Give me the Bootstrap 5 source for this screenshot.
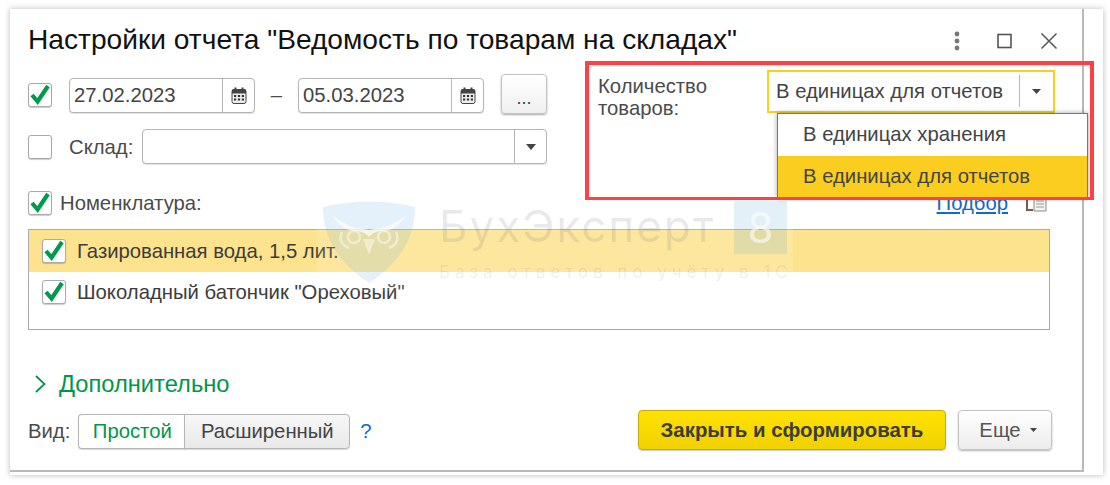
<!DOCTYPE html>
<html lang="ru">
<head>
<meta charset="utf-8">
<title>Настройки отчета</title>
<link rel="stylesheet" href="https://cdn.jsdelivr.net/npm/bootstrap@5.3.0/dist/css/bootstrap.min.css">
<style>
html,body{height:100%;background:#fff;overflow:hidden}
body{font-family:"Liberation Sans",Arial,sans-serif;font-size:20.3px;color:#4b4b4b;line-height:22px}
.sheet{width:1093px;height:466px;margin:9px 0 0 10px;background:#fff;box-shadow:0 0 6px rgba(0,0,0,.28)}
.win{position:relative;width:1074px;height:463px;border-right:2px solid #b9b9b9;border-bottom:2px solid #b9b9b9;padding:13px 32px 0 18px}
.ttl{height:36px;line-height:36px;font-size:28.15px;color:#111;margin:0 0 12px;font-weight:400}
.ctrls{position:absolute;top:14px;right:24px;height:36px;gap:27px}
.top{height:121px}
.lcol{width:519px;padding-top:5px;margin-right:51px}
.r1{height:40px}
.r2{height:35px;margin-top:14px}
.r3{height:23px}
.form-check-input.box{width:24px;height:24px;margin:0;flex:none;border:1px solid #aaa;border-radius:3px;box-shadow:0 1px 1px rgba(0,0,0,.2);background-color:#fff;background-size:26px 26px;background-position:center;opacity:1}
.form-check-input.box:checked{background-color:#fff;border-color:#aaa;--bs-form-check-bg-image:url("data:image/svg+xml,%3Csvg xmlns='http://www.w3.org/2000/svg' viewBox='0 0 26 26'%3E%3Cpath fill='none' stroke='%23009a4c' stroke-width='4.2' d='M5 13l5.6 6.5L21 4'/%3E%3C/svg%3E")}
.fld{height:35px;border:1px solid #b5b5b5;border-radius:4px;background:#fff;box-shadow:0 1px 1px rgba(0,0,0,.12);color:#444;flex-wrap:nowrap}
.fld .val{flex:1;padding:0 4px;line-height:33px;white-space:nowrap}
.fld .cap{width:32px;border-left:1px solid #b5b5b5;height:100%}
.dt{width:186px}
.gap1{margin-left:17px}
.dash{width:43px;text-align:center}
.more{width:46px;height:40px;margin:0 0 2px 17px;padding:8px 0 0;background:linear-gradient(#fff,#f0f0f0);border:1px solid #c4c4c4;border-radius:4px;box-shadow:0 1px 2px rgba(0,0,0,.35);color:#444;font-size:18px;line-height:22px}
.sk{width:73px;padding-left:17px;white-space:nowrap;flex:none}
.wide{width:405px}
.lblq{width:169px;padding-top:5px}
.combo{position:relative;width:288px;height:43px;border:2px solid #fccf1f;background:#fff;color:#444;padding:0 0 0 7px;line-height:39px}
.combo .sep{width:34px;height:32px;border-left:1px solid #b5b5b5;margin-top:3px}
.pop{display:block;position:absolute;left:8px;top:41px;width:311px;height:85px;min-width:0;padding:0;margin:0;border:1px solid #777;border-radius:0;box-shadow:0 0 5px rgba(0,0,0,.35);background:#fff;z-index:3}
.pop .dropdown-item{height:42px;padding:0 25px;line-height:41px;color:#444;font-size:20.3px}
.pop .dropdown-item.active{background:#fbcd1f;color:#444}
.redbox{position:absolute;left:575px;top:52px;width:509px;height:139px;border:solid #ff4044;border-width:4px 4px 3px 4px;z-index:4}
.nom{margin-left:8px}
.pick{color:#1468c8;text-decoration:underline;margin-right:18px}
.doc{width:22px;height:16px;margin-right:2px;margin-top:2px}
.tbl{margin-top:15px;height:101px;border:1px solid #aaa;border-radius:0;background:#fff;color:#3c3c3c}
.tbl .list-group-item{border:0;border-radius:0;padding:0 0 0 13px;height:42px;background:transparent;color:#3c3c3c;gap:11px}
.tbl .sel{background:#fde38e}
.tbl .pl{height:40px}
.adv{margin-top:39px;height:30px;color:#00964a;font-size:23.7px;line-height:30px;padding-left:7px;gap:13px}
.foot{margin-top:11px;height:40px;margin-right:-2px}
.cap-v{padding-top:2px}
.seg{height:35px;margin:2px 0 0 8px}
.seg .btn{height:35px;padding:0;font-size:20.3px;line-height:33px;border:1px solid #b5b5b5;border-radius:4px;box-shadow:0 1px 1px rgba(0,0,0,.15)}
.seg .on{width:107px;color:#00964a;background:#fff;border-right:0;border-top-right-radius:0;border-bottom-right-radius:0}
.seg .off{width:166px;color:#444;background:linear-gradient(#f7f7f7,#e9e9e9);border-top-left-radius:0;border-bottom-left-radius:0}
.hlp{color:#1468c8;margin-left:10px;padding-top:2px}
.go{width:308px;height:40px;padding:0;background:linear-gradient(#ffe200,#f1d100);border:1px solid #c4aa10;border-radius:4px;color:#3c3c3c;font-weight:700;font-size:20.4px;box-shadow:0 1px 1px rgba(0,0,0,.2)}
.alt{width:94px;height:40px;margin-left:12px;padding:0 0 0 6px;background:linear-gradient(#fff,#ececec);border:1px solid #c4c4c4;border-radius:4px;color:#555;font-size:20.3px;box-shadow:0 1px 2px rgba(0,0,0,.3);gap:9px}
.mark{position:absolute;left:307px;top:0;margin-top:190px;width:476px;height:92px;background:rgba(255,255,255,.14);z-index:2;pointer-events:none}
.mk-sh{position:absolute;left:6px;top:2px;width:92px;height:82px}
.mk-t{position:absolute;left:122px;top:5px;font-family:Inter,"Liberation Sans",sans-serif;font-size:44px;line-height:44px;letter-spacing:2px;color:rgba(80,80,100,.13);white-space:nowrap}
.mk-b{position:absolute;left:417px;top:2px;width:53px;height:53px;background:rgba(90,165,215,.17);color:rgba(255,255,255,.62);font-family:Inter,"Liberation Sans",sans-serif;font-size:42px;line-height:53px;text-align:center}
.mk-s{position:absolute;left:122px;top:61px;font-family:Inter,"Liberation Sans",sans-serif;font-size:17px;line-height:24px;letter-spacing:5px;color:rgba(80,80,100,.1);white-space:nowrap}
</style>
</head>
<body>
<div class="sheet">
<div class="win">
  <h1 class="ttl">Настройки отчета "Ведомость по товарам на складах"</h1>
  <div class="ctrls d-flex align-items-center">
    <svg width="10" height="22" viewBox="0 0 10 22"><g fill="#777"><circle cx="5" cy="4" r="2.4"/><circle cx="5" cy="11" r="2.4"/><circle cx="5" cy="18" r="2.4"/></g></svg>
    <svg width="16" height="16" viewBox="0 0 16 16" class="ms-2"><rect x="1" y="1.5" width="13" height="13" fill="none" stroke="#555" stroke-width="1.6"/></svg>
    <svg width="18" height="18" viewBox="0 0 18 18"><path d="M1.5 1.5l15 15M16.5 1.5l-15 15" stroke="#555" stroke-width="1.5" fill="none"/></svg>
  </div>

  <div class="top d-flex align-items-start">
    <div class="lcol">
      <div class="r1 d-flex align-items-center">
        <input class="form-check-input box" type="checkbox" checked aria-label="Период">
        <div class="fld dt gap1 d-flex"><span class="val">27.02.2023</span><span class="cap d-flex align-items-center justify-content-center"><svg width="16" height="17" viewBox="0 0 16 17"><rect x="1" y="2.5" width="14" height="14" rx="2" fill="#eee" stroke="#444"/><rect x="1" y="2.5" width="14" height="4" fill="#444"/><rect x="3.5" y="0.5" width="2" height="3.5" fill="#444"/><rect x="10.5" y="0.5" width="2" height="3.5" fill="#444"/><g fill="#333"><rect x="3" y="8" width="2.2" height="2"/><rect x="6.9" y="8" width="2.2" height="2"/><rect x="10.8" y="8" width="2.2" height="2"/><rect x="3" y="11.5" width="2.2" height="2"/><rect x="6.9" y="11.5" width="2.2" height="2"/><rect x="10.8" y="11.5" width="2.2" height="2"/></g></svg></span></div>
        <span class="dash">–</span>
        <div class="fld dt d-flex"><span class="val">05.03.2023</span><span class="cap d-flex align-items-center justify-content-center"><svg width="16" height="17" viewBox="0 0 16 17"><rect x="1" y="2.5" width="14" height="14" rx="2" fill="#eee" stroke="#444"/><rect x="1" y="2.5" width="14" height="4" fill="#444"/><rect x="3.5" y="0.5" width="2" height="3.5" fill="#444"/><rect x="10.5" y="0.5" width="2" height="3.5" fill="#444"/><g fill="#333"><rect x="3" y="8" width="2.2" height="2"/><rect x="6.9" y="8" width="2.2" height="2"/><rect x="10.8" y="8" width="2.2" height="2"/><rect x="3" y="11.5" width="2.2" height="2"/><rect x="6.9" y="11.5" width="2.2" height="2"/><rect x="10.8" y="11.5" width="2.2" height="2"/></g></svg></span></div>
        <button type="button" class="btn more">...</button>
      </div>
      <div class="r2 d-flex align-items-center">
        <input class="form-check-input box" type="checkbox" aria-label="Склад">
        <span class="sk">Склад:</span>
        <div class="fld wide d-flex ms-auto"><span class="val"></span><span class="cap d-flex align-items-center justify-content-center"><svg width="10" height="6" viewBox="0 0 10 6"><path d="M0 0h10L5 6z" fill="#444"/></svg></span></div>
      </div>
    </div>
    <div class="d-flex align-items-start">
      <div class="lblq">Количество<br>товаров:</div>
      <div class="combo d-flex">
        <span class="flex-grow-1 text-nowrap">В единицах для отчетов</span>
        <span class="sep d-flex align-items-center justify-content-center"><svg width="9" height="5" viewBox="0 0 9 5"><path d="M0 0h9L4.5 5z" fill="#444"/></svg></span>
        <ul class="dropdown-menu pop">
          <li><a class="dropdown-item" href="#">В единицах хранения</a></li>
          <li><a class="dropdown-item active" href="#">В единицах для отчетов</a></li>
        </ul>
      </div>
    </div>
  </div>

  <div class="r3 d-flex align-items-center">
    <input class="form-check-input box" type="checkbox" checked aria-label="Номенклатура">
    <span class="nom">Номенклатура:</span>
    <a class="pick ms-auto" href="#">Подбор</a>
    <svg class="doc" viewBox="0 0 22 16"><path d="M1 3v11h6" fill="none" stroke="#7a5a50" stroke-width="2"/><path d="M8 1h12v14H8z" fill="#f4f4f4" stroke="#888"/><path d="M10 5h8M10 8h8M10 11h8" stroke="#999"/></svg>
  </div>

  <div class="list-group tbl">
    <div class="list-group-item sel d-flex align-items-center"><input class="form-check-input box" type="checkbox" checked aria-label="Газированная вода"><span>Газированная вода, 1,5 лит.</span></div>
    <div class="list-group-item pl d-flex align-items-center"><input class="form-check-input box" type="checkbox" checked aria-label="Шоколадный батончик"><span>Шоколадный батончик "Ореховый"</span></div>
  </div>

  <div class="adv d-flex align-items-center">
    <svg width="11" height="18" viewBox="0 0 11 18"><path d="M1 1l8.5 8L1 17" fill="none" stroke="#00964a" stroke-width="1.8"/></svg>
    <span>Дополнительно</span>
  </div>

  <div class="foot d-flex align-items-center">
    <span class="cap-v">Вид:</span>
    <div class="btn-group seg" role="group">
      <button type="button" class="btn on">Простой</button>
      <button type="button" class="btn off">Расширенный</button>
    </div>
    <span class="hlp">?</span>
    <button type="button" class="btn go ms-auto">Закрыть и сформировать</button>
    <button type="button" class="btn alt d-flex align-items-center justify-content-center">Еще <svg width="7" height="4" viewBox="0 0 7 4"><path d="M0 0h7L3.5 4z" fill="#444"/></svg></button>
  </div>

  <div class="mark">
    <svg class="mk-sh" viewBox="0 0 92 82"><path d="M0 6Q46-5 92 6 92 52 46 82 0 52 0 6z" fill="rgba(95,170,225,.17)"/><path d="M10 15Q24 27 46 29 68 27 82 15 74 30 58 30 50 31 46 36 42 31 34 30 18 30 10 15z" fill="rgba(255,255,255,.7)"/><g fill="none" stroke="rgba(255,255,255,.45)" stroke-width="2.6"><circle cx="31" cy="36" r="6"/><circle cx="61" cy="36" r="6"/><path d="M19 31Q14 42 26 47M73 31Q78 42 66 47"/></g><path d="M40 38L46 54 52 38z" fill="rgba(255,255,255,.45)"/></svg>
    <div class="mk-t">БухЭксперт</div>
    <div class="mk-b">8</div>
    <div class="mk-s">База ответов по учёту в 1С</div>
  </div>

  <div class="redbox"></div>
</div>
</div>
<script src="https://cdn.jsdelivr.net/npm/bootstrap@5.3.0/dist/js/bootstrap.bundle.min.js"></script>
</body>
</html>
